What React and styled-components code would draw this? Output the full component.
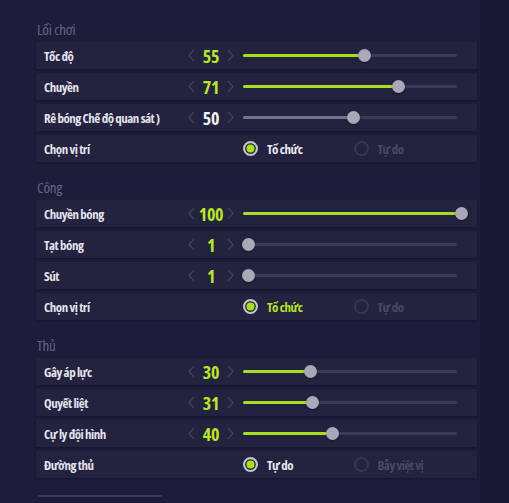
import styled, { createGlobalStyle } from 'styled-components';

const GlobalStyle = createGlobalStyle`
  html, body {
    margin: 0;
    padding: 0;
    background: #1c1b38;
    overflow: hidden;
  }
  body {
    font-family: "Open Sans", "Roboto", sans-serif;
    font-stretch: 75%;
  }
`;

const sections = [
  {
    title: 'Lối chơi',
    rows: [
      { label: 'Tốc độ', value: 55 },
      { label: 'Chuyền', value: 71 },
      { label: 'Rê bóng Chế độ quan sát )', value: 50, muted: true },
      { label: 'Chọn vị trí', options: ['Tổ chức', 'Tự do'], selected: 0 },
    ],
  },
  {
    title: 'Công',
    rows: [
      { label: 'Chuyền bóng', value: 100 },
      { label: 'Tạt bóng', value: 1 },
      { label: 'Sút', value: 1 },
      { label: 'Chọn vị trí', options: ['Tổ chức', 'Tự do'], selected: 0, accent: true },
    ],
  },
  {
    title: 'Thủ',
    rows: [
      { label: 'Gây áp lực', value: 30 },
      { label: 'Quyết liệt', value: 31 },
      { label: 'Cự ly đội hình', value: 40 },
      { label: 'Đường thủ', options: ['Tự do', 'Bẫy việt vị'], selected: 0 },
    ],
  },
];

function Chevron({ dir }) {
  const pts = dir === 'left' ? '6,1 1,6.5 6,12' : '1,1 6,6.5 1,12';
  return (
    <svg width="7" height="13" viewBox="0 0 7 13">
      <polyline points={pts} fill="none" stroke="#44435f" strokeWidth="1.2" />
    </svg>
  );
}

function Slider({ value, muted }) {
  const center = 3 + value * 2.15;
  return (
    <SliderWrap>
      <Track>
        <Fill $muted={muted} style={{ width: center }} />
        <Thumb style={{ left: center - 6.5 }} />
      </Track>
    </SliderWrap>
  );
}

function Radios({ options, selected, accent }) {
  return (
    <RadioGroup>
      {options.map((o, i) => (
        <RadioOption key={o}>
          <Circle $on={i === selected} />
          <RadioText $on={i === selected} $accent={accent}>{o}</RadioText>
        </RadioOption>
      ))}
    </RadioGroup>
  );
}

export default function App() {
  return (
    <Screen>
      <GlobalStyle />
      <Panel>
        {sections.map((s) => (
          <Section key={s.title}>
            <SectionTitle>{s.title}</SectionTitle>
            <Rows>
              {s.rows.map((r) => (
                <Row key={r.label}>
                  <Label>{r.label}</Label>
                  {r.options ? (
                    <>
                      <span />
                      <Radios options={r.options} selected={r.selected} accent={r.accent} />
                    </>
                  ) : (
                    <>
                      <Stepper>
                        <Chevron dir="left" />
                        <Num $muted={r.muted}>{r.value}</Num>
                        <Chevron dir="right" />
                      </Stepper>
                      <Slider value={r.value} muted={r.muted} />
                    </>
                  )}
                </Row>
              ))}
            </Rows>
          </Section>
        ))}
        <BottomButton />
      </Panel>
      <Side />
    </Screen>
  );
}

const Screen = styled.div`
  display: flex;
  height: 503px;
`;

const Panel = styled.div`
  width: 480px;
  padding: 21px 0 0 36px;
  box-sizing: border-box;
  background: #1d1c3a;
`;

const Side = styled.div`
  flex: 1;
  background: #171633;
`;

const Section = styled.div`
  margin-bottom: 17px;
`;

const SectionTitle = styled.div`
  height: 17px;
  line-height: 17px;
  margin-bottom: 4px;
  padding-left: 1px;
  font-size: 15px;
  font-weight: 500;
  letter-spacing: -0.2px;
  color: #66658a;
`;

const Rows = styled.div`
  display: flex;
  flex-direction: column;
  gap: 4px;
  width: 441px;
`;

const Row = styled.div`
  height: 27px;
  display: grid;
  grid-template-columns: 148px 56px 224px 1fr;
  align-items: center;
  background: #23223f;
  box-shadow: 0 1px 2px rgba(0, 0, 0, 0.25);
`;

const Label = styled.div`
  padding-left: 8px;
  font-size: 13px;
  font-weight: 700;
  letter-spacing: -0.5px;
  color: #e4e3ec;
  white-space: nowrap;
`;

const Stepper = styled.div`
  display: flex;
  align-items: center;
  padding: 0 6px 0 4px;
  svg {
    flex: none;
  }
`;

const Num = styled.div`
  flex: 1;
  text-align: center;
  font-size: 18px;
  font-weight: 700;
  letter-spacing: -0.3px;
  color: ${(p) => (p.$muted ? '#f2f2f6' : '#b9e629')};
`;

const SliderWrap = styled.div`
  height: 100%;
  display: flex;
  align-items: center;
`;

const Track = styled.div`
  position: relative;
  margin-left: 3px;
  width: 214px;
  height: 3px;
  border-radius: 2px;
  background: #3b3a58;
`;

const Fill = styled.div`
  position: absolute;
  left: 0;
  top: 0;
  height: 3px;
  border-radius: 2px;
  background: ${(p) => (p.$muted ? '#74738a' : '#a7df1e')};
`;

const Thumb = styled.div`
  position: absolute;
  top: -5px;
  width: 13px;
  height: 13px;
  border-radius: 50%;
  background: #a9a8b6;
  box-shadow: 0 1px 2px rgba(0, 0, 0, 0.4);
`;

const RadioGroup = styled.div`
  display: flex;
  padding-left: 3px;
`;

const RadioOption = styled.div`
  width: 118px;
  display: flex;
  align-items: center;
  gap: 9px;
`;

const Circle = styled.div`
  width: 15px;
  height: 15px;
  box-sizing: border-box;
  border-radius: 50%;
  border: ${(p) => (p.$on ? '2px solid #c3c2ce' : '2px solid #363553')};
  background: ${(p) => (p.$on ? '#a6e01d' : 'transparent')};
  box-shadow: ${(p) => (p.$on ? 'inset 0 0 0 1.5px #2a2946' : 'none')};
`;

const RadioText = styled.span`
  font-size: 13px;
  font-weight: 700;
  letter-spacing: -0.5px;
  color: ${(p) => (!p.$on ? '#4a4966' : p.$accent ? '#b9e629' : '#ecebf2')};
`;

const BottomButton = styled.div`
  margin: 4px 0 0 2px;
  width: 124px;
  height: 20px;
  border-top: 2px solid #3a3957;
`;
